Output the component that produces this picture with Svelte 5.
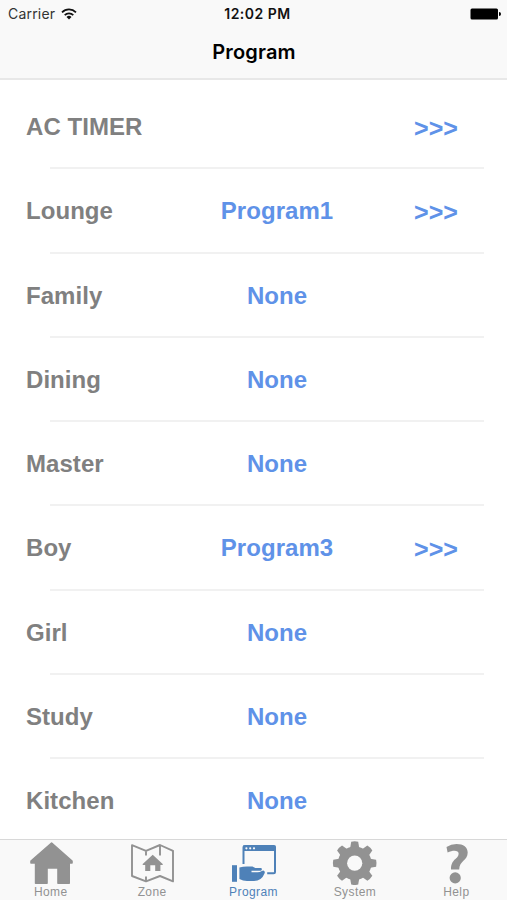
<script lang="ts">
  type Row = { name: string; program?: string; more?: boolean };

  const rows: Row[] = [
    { name: "AC TIMER", more: true },
    { name: "Lounge", program: "Program1", more: true },
    { name: "Family", program: "None" },
    { name: "Dining", program: "None" },
    { name: "Master", program: "None" },
    { name: "Boy", program: "Program3", more: true },
    { name: "Girl", program: "None" },
    { name: "Study", program: "None" },
    { name: "Kitchen", program: "None" },
  ];

  const tabs = ["Home", "Zone", "Program", "System", "Help"];
  let active = $state("Program");

  const teeth = [0, 45, 90, 135, 180, 225, 270, 315];
</script>

<div class="screen">
  <header>
    <div class="status">
      <span class="carrier">
        Carrier
        <svg width="16" height="12" viewBox="0 0 16 12">
          <g fill="none" stroke="#111" stroke-width="1.7">
            <path d="M1 4.3a10 10 0 0 1 14 0" />
            <path d="M3.7 7.1a6.1 6.1 0 0 1 8.6 0" />
          </g>
          <path d="M8 11.6L5.5 9.1a3.5 3.5 0 0 1 5 0z" fill="#111" />
        </svg>
      </span>
      <span class="time">12:02 PM</span>
      <svg class="battery" width="31" height="12" viewBox="0 0 31 12">
        <rect x=".5" y=".5" width="27.5" height="11" rx="1.5" fill="#000" />
        <path d="M29 4a2 2 0 0 1 0 4z" fill="#000" />
      </svg>
    </div>
    <h1>Program</h1>
  </header>

  <main>
    {#each rows as row}
      <div class="row">
        <span class="name">{row.name}</span>
        <span class="program">{row.program ?? ""}</span>
        <span class="more">{row.more ? ">>>" : ""}</span>
      </div>
    {/each}
  </main>

  <nav>
    {#each tabs as tab}
      <button class:active={tab === active} onclick={() => (active = tab)}>
        <svg width="48" height="45" viewBox="0 0 48 45" fill="currentColor">
          {#if tab === "Home"}
            <path
              d="M24.6 3L45 21.2V23H42.2V43.3H31V28H20V43.3H8.6V23H4V21.2z"
              stroke="currentColor"
              stroke-width="1.6"
              stroke-linejoin="round"
            />
          {:else if tab === "Zone"}
            <path
              d="M4 5.2L18 10.8L32 5L45 10.8V41.4L32 36L18 41.4L4 36z M18 10.8V15.5 M32 5V15.5 M18 36.5V41"
              fill="none"
              stroke="currentColor"
              stroke-width="1.9"
              stroke-linejoin="round"
            />
            <path d="M24.7 14.7L34.7 24V25H32.4V31H27.2V25.2H22.3V31H17.2V25H14.7V24z" />
          {:else if tab === "Program"}
            <path
              d="M13.5 24V7.5Q13.5 6 15 6H43.5Q45 6 45 7.5V31.8Q45 33.3 43.5 33.3H37.2"
              fill="none"
              stroke="currentColor"
              stroke-width="2"
            />
            <path d="M13 5.5H45.5V11H13z" />
            <g fill="#f9f9f9">
              <circle cx="16.4" cy="8.3" r="1.1" />
              <circle cx="20.2" cy="8.3" r="1.1" />
              <circle cx="24" cy="8.3" r="1.1" />
            </g>
            <path d="M2 25.2H7V41.8H2z" />
            <path
              d="M9.4 27.5Q13 26.4 17 26.4H22.5Q24.5 28 26.5 28H30.8Q31.9 28 31.9 29.3T30.6 30.8H21.5V32.3H27.5Q30 32.3 31.8 30.9L33.4 30.6Q35.5 31.3 34.5 33.5Q31.5 41 24 41H17Q13 41 9.4 39z"
            />
          {:else if tab === "System"}
            <g transform="translate(-.8 0)">
              {#each teeth as angle}
                <path
                  d="M19.8 9L21 1.8Q24.5 .9 28 1.8L29.2 9z"
                  transform="rotate({angle} 24.5 23.2)"
                />
              {/each}
              <circle cx="24.5" cy="23.2" r="16.8" />
              <circle cx="24.5" cy="23.2" r="7.6" fill="#f9f9f9" />
            </g>
          {:else}
            <path
              d="M14.5 7Q19 4 24.5 4C31.5 4 35.7 7.2 35.7 12.6C35.7 20.8 27.2 21 27.2 29.6H19C19 18.5 26.6 19.6 26.6 13.6C26.6 9.8 20.8 10 15.6 12.4z"
            />
            <circle cx="23.2" cy="37.9" r="5.6" />
          {/if}
        </svg>
        <span>{tab}</span>
      </button>
    {/each}
  </nav>
</div>

<style>
  :global(body) {
    margin: 0;
    background: #fff;
  }
  .screen {
    display: flex;
    flex-direction: column;
    height: 900px;
    overflow: hidden;
    font-family: "Liberation Sans", Arial, sans-serif;
  }
  header {
    height: 78px;
    flex: none;
    background: #f9f9f9;
    border-bottom: 2px solid #e8e8e8;
    font-family: Inter, sans-serif;
  }
  .status {
    display: grid;
    grid-template-columns: 1fr auto 1fr;
    align-items: center;
    height: 27px;
    padding: 0 6px 0 8px;
    font-size: 14px;
  }
  .carrier {
    display: flex;
    align-items: center;
    gap: 6px;
    color: #333;
    letter-spacing: 0.2px;
  }
  .time {
    font-weight: 600;
    letter-spacing: 0.5px;
    color: #111;
    margin-left: 6px;
  }
  .battery {
    justify-self: end;
  }
  h1 {
    margin: 12px 0 0;
    font-size: 20px;
    line-height: 27px;
    font-weight: 600;
    letter-spacing: 0.15px;
    text-align: center;
    color: #000;
    padding-left: 1px;
  }
  main {
    flex: 1;
    padding-top: 5px;
    overflow: hidden;
  }
  .row {
    display: grid;
    grid-template-columns: 176px 150px 1fr;
    align-items: center;
    height: 84.25px;
    box-sizing: border-box;
    padding-left: 26px;
    font-size: 24px;
    font-weight: 700;
    letter-spacing: 0.05px;
    color: #808080;
    background: linear-gradient(#f1f1f1, #f1f1f1) 50px 100% / 434px 2px no-repeat;
  }
  .program {
    text-align: center;
    color: #5f92e8;
  }
  .more {
    padding: 2px 0 0 62px;
    font-size: 25px;
    color: #5f92e8;
  }
  nav {
    display: flex;
    flex: none;
    height: 60px;
    background: #f9f9f9;
    border-top: 1px solid #d8d8d8;
  }
  button {
    flex: 1;
    display: flex;
    flex-direction: column;
    align-items: center;
    padding: 0;
    border: 0;
    background: none;
    font: 12px/14px "Liberation Sans", Arial, sans-serif;
    letter-spacing: 0.4px;
    color: #929292;
  }
  button.active {
    color: #4e81b8;
  }
</style>
